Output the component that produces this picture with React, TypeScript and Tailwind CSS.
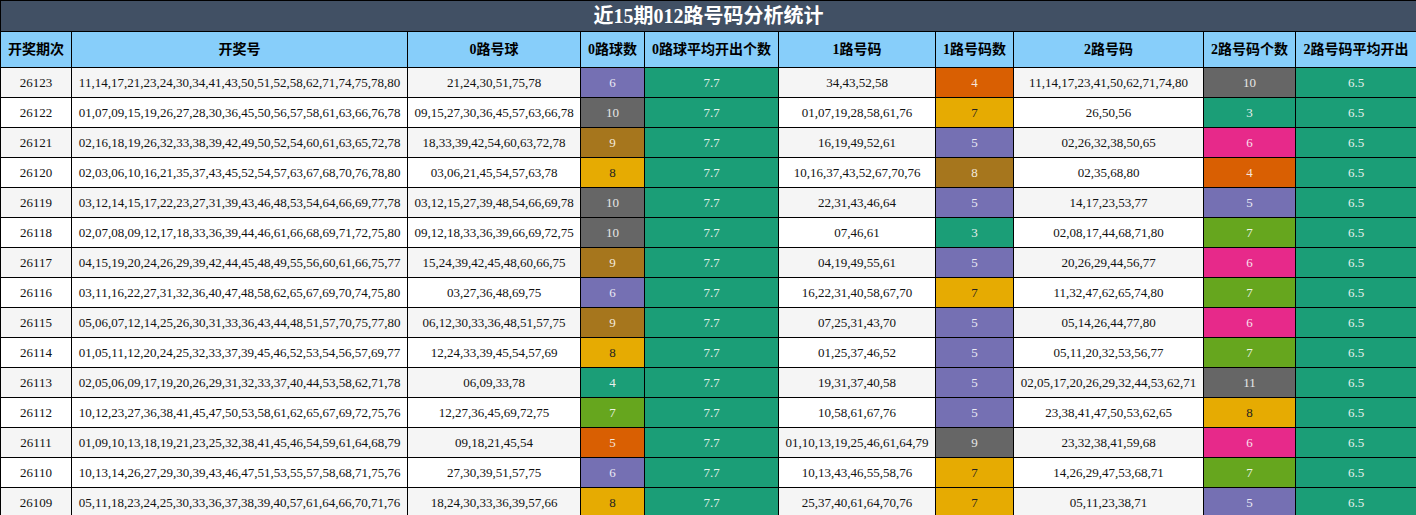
const rows: [string, string, string, number, string, number, string, number][] = [
  ['26123', '11,14,17,21,23,24,30,34,41,43,50,51,52,58,62,71,74,75,78,80', '21,24,30,51,75,78', 6, '34,43,52,58', 4, '11,14,17,23,41,50,62,71,74,80', 10],
  ['26122', '01,07,09,15,19,26,27,28,30,36,45,50,56,57,58,61,63,66,76,78', '09,15,27,30,36,45,57,63,66,78', 10, '01,07,19,28,58,61,76', 7, '26,50,56', 3],
  ['26121', '02,16,18,19,26,32,33,38,39,42,49,50,52,54,60,61,63,65,72,78', '18,33,39,42,54,60,63,72,78', 9, '16,19,49,52,61', 5, '02,26,32,38,50,65', 6],
  ['26120', '02,03,06,10,16,21,35,37,43,45,52,54,57,63,67,68,70,76,78,80', '03,06,21,45,54,57,63,78', 8, '10,16,37,43,52,67,70,76', 8, '02,35,68,80', 4],
  ['26119', '03,12,14,15,17,22,23,27,31,39,43,46,48,53,54,64,66,69,77,78', '03,12,15,27,39,48,54,66,69,78', 10, '22,31,43,46,64', 5, '14,17,23,53,77', 5],
  ['26118', '02,07,08,09,12,17,18,33,36,39,44,46,61,66,68,69,71,72,75,80', '09,12,18,33,36,39,66,69,72,75', 10, '07,46,61', 3, '02,08,17,44,68,71,80', 7],
  ['26117', '04,15,19,20,24,26,29,39,42,44,45,48,49,55,56,60,61,66,75,77', '15,24,39,42,45,48,60,66,75', 9, '04,19,49,55,61', 5, '20,26,29,44,56,77', 6],
  ['26116', '03,11,16,22,27,31,32,36,40,47,48,58,62,65,67,69,70,74,75,80', '03,27,36,48,69,75', 6, '16,22,31,40,58,67,70', 7, '11,32,47,62,65,74,80', 7],
  ['26115', '05,06,07,12,14,25,26,30,31,33,36,43,44,48,51,57,70,75,77,80', '06,12,30,33,36,48,51,57,75', 9, '07,25,31,43,70', 5, '05,14,26,44,77,80', 6],
  ['26114', '01,05,11,12,20,24,25,32,33,37,39,45,46,52,53,54,56,57,69,77', '12,24,33,39,45,54,57,69', 8, '01,25,37,46,52', 5, '05,11,20,32,53,56,77', 7],
  ['26113', '02,05,06,09,17,19,20,26,29,31,32,33,37,40,44,53,58,62,71,78', '06,09,33,78', 4, '19,31,37,40,58', 5, '02,05,17,20,26,29,32,44,53,62,71', 11],
  ['26112', '10,12,23,27,36,38,41,45,47,50,53,58,61,62,65,67,69,72,75,76', '12,27,36,45,69,72,75', 7, '10,58,61,67,76', 5, '23,38,41,47,50,53,62,65', 8],
  ['26111', '01,09,10,13,18,19,21,23,25,32,38,41,45,46,54,59,61,64,68,79', '09,18,21,45,54', 5, '01,10,13,19,25,46,61,64,79', 9, '23,32,38,41,59,68', 6],
  ['26110', '10,13,14,26,27,29,30,39,43,46,47,51,53,55,57,58,68,71,75,76', '27,30,39,51,57,75', 6, '10,13,43,46,55,58,76', 7, '14,26,29,47,53,68,71', 7],
  ['26109', '05,11,18,23,24,25,30,33,36,37,38,39,40,57,61,64,66,70,71,76', '18,24,30,33,36,39,57,66', 8, '25,37,40,61,64,70,76', 7, '05,11,23,38,71', 5],
];

const G = 'bg-[#1b9e77] text-[#e8f0ec]';
const O = 'bg-[#d95f02] text-[#f5e6dc]';
const P = 'bg-[#7570b3] text-[#ebeaf3]';
const K = 'bg-[#e7298a] text-[#f8e2ee]';
const L = 'bg-[#66a61e] text-[#eef4e6]';
const Y = 'bg-[#e6ab02] text-[#222]';
const B = 'bg-[#a6761d] text-[#f3ebdd]';
const R = 'bg-[#666666] text-[#e6e6e6]';

const map0: Record<number, string> = { 4: G, 5: O, 6: P, 7: L, 8: Y, 9: B, 10: R };
const map1: Record<number, string> = { 3: G, 4: O, 5: P, 7: Y, 8: B, 9: R };
const map2: Record<number, string> = { 3: G, 4: O, 5: P, 6: K, 7: L, 8: Y, 10: R, 11: R };

const heads = ['开奖期次', '开奖号', '0路号球', '0路球数', '0路球平均开出个数', '1路号码', '1路号码数', '2路号码', '2路号码个数', '2路号码平均开出'];
const widths = ['w-[71px]', 'w-[336px]', 'w-[173px]', 'w-[64px]', 'w-[134px]', 'w-[157px]', 'w-[78px]', 'w-[190px]', 'w-[92px]', 'w-[121px]'];

export default function App() {
  return (
    <div className="w-[1416px] h-[515px] overflow-hidden bg-white" style={{ fontFamily: '"Liberation Serif", "Noto Sans CJK SC", serif' }}>
      <table className="border-collapse table-fixed w-[1416px] text-[13px]">
        <colgroup>
          {widths.map((w, i) => <col key={i} className={w} />)}
        </colgroup>
        <thead>
          <tr className="h-[29px]">
            <th colSpan={10} className="bg-[#415064] text-white text-[20px] font-bold border border-black">近15期012路号码分析统计</th>
          </tr>
          <tr className="h-[36px]">
            {heads.map(h => (
              <th key={h} className="bg-[#87cefa] text-black text-[14px] font-bold border border-black whitespace-nowrap">{h}</th>
            ))}
          </tr>
        </thead>
        <tbody>
          {rows.map((r, i) => {
            const bg = i % 2 === 0 ? 'bg-[#f5f5f5]' : 'bg-white';
            const c = `border border-black text-center whitespace-nowrap ${bg} text-[#111]`;
            const s = 'border border-black text-center';
            return (
              <tr key={r[0]} className="h-[30px]">
                <td className={c}>{r[0]}</td>
                <td className={c}>{r[1]}</td>
                <td className={c}>{r[2]}</td>
                <td className={`${s} ${map0[r[3]]}`}>{r[3]}</td>
                <td className={`${s} ${G}`}>7.7</td>
                <td className={c}>{r[4]}</td>
                <td className={`${s} ${map1[r[5]]}`}>{r[5]}</td>
                <td className={c}>{r[6]}</td>
                <td className={`${s} ${map2[r[7]]}`}>{r[7]}</td>
                <td className={`${s} ${G}`}>6.5</td>
              </tr>
            );
          })}
        </tbody>
      </table>
    </div>
  );
}
